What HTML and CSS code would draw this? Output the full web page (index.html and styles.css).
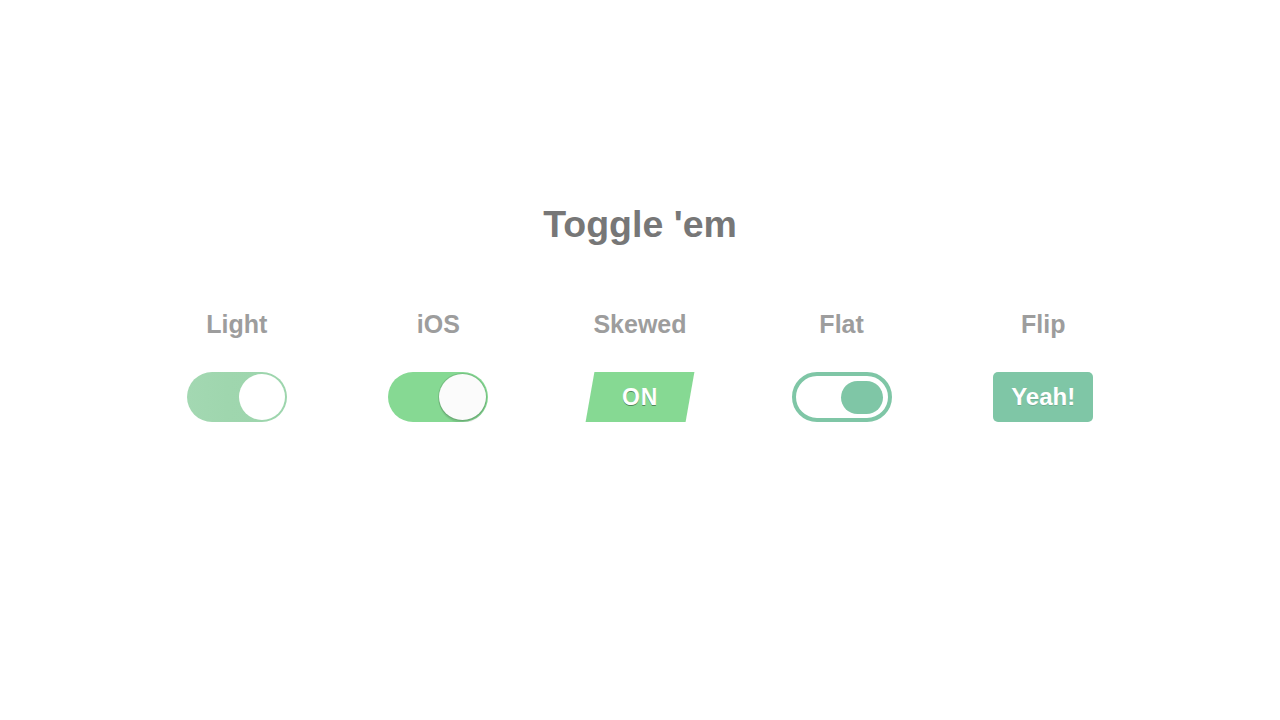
FILE: index.html
```html
<!DOCTYPE html>
<html lang="en">
<head>
    <meta charset="UTF-8">
    <meta name="viewport" content="width=device-width, initial-scale=1.0">
    <title>Toggle 'em</title>
    <link rel="stylesheet" href="styles.css">
</head>
<body>
    <div class="wrap">
        <h1 class="title">Toggle 'em</h1>

        <div class="toggles">
            <!-- Light -->
            <div class="toggle-col">
                <h4 class="toggle-name">Light</h4>
                <input class="tgl" id="cb1" type="checkbox" checked>
                <label class="tgl-btn tgl-light" for="cb1"><span class="knob"></span></label>
            </div>

            <!-- iOS -->
            <div class="toggle-col">
                <h4 class="toggle-name">iOS</h4>
                <input class="tgl" id="cb2" type="checkbox" checked>
                <label class="tgl-btn tgl-ios" for="cb2"><span class="knob"></span></label>
            </div>

            <!-- Skewed -->
            <div class="toggle-col">
                <h4 class="toggle-name">Skewed</h4>
                <input class="tgl" id="cb3" type="checkbox" checked>
                <label class="tgl-btn tgl-skewed" for="cb3"><span class="skew-text">ON</span></label>
            </div>

            <!-- Flat -->
            <div class="toggle-col">
                <h4 class="toggle-name">Flat</h4>
                <input class="tgl" id="cb4" type="checkbox" checked>
                <label class="tgl-btn tgl-flat" for="cb4"><span class="knob"></span></label>
            </div>

            <!-- Flip -->
            <div class="toggle-col">
                <h4 class="toggle-name">Flip</h4>
                <input class="tgl" id="cb5" type="checkbox" checked>
                <label class="tgl-btn tgl-flip" for="cb5">Yeah!</label>
            </div>
        </div>
    </div>
</body>
</html>
```

FILE: styles.css
```css
body {
    margin: 0;
    padding: 0;
    font-family: 'Liberation Sans', Arial, sans-serif;
    background-color: #fff;
}

.wrap {
    padding-top: 205px;
}

.title {
    margin: 0;
    font-size: 37.5px;
    line-height: 38px;
    font-weight: bold;
    color: #777;
    text-align: center;
}

.toggles {
    width: 1008px;
    margin: 69px auto 0;
    display: grid;
    grid-template-columns: repeat(5, 1fr);
}

.toggle-col {
    display: flex;
    flex-direction: column;
    align-items: center;
}

.toggle-name {
    margin: 0 0 35px;
    font-size: 25px;
    line-height: 25px;
    font-weight: bold;
    color: #9d9d9d;
}

.tgl {
    display: none;
}

.tgl-btn {
    box-sizing: border-box;
    width: 100px;
    height: 50px;
    display: flex;
    justify-content: flex-end;
    align-items: center;
    cursor: pointer;
    user-select: none;
}

/* Light */
.tgl-light {
    padding: 2px;
    border-radius: 25px;
    background: linear-gradient(90deg, #a3d8b2 0%, #9fd6ae 40%, #9dd5ad 100%);
}

.tgl-light .knob {
    width: 46px;
    height: 46px;
    border-radius: 50%;
    background-color: #fff;
}

/* iOS */
.tgl-ios {
    padding: 2px;
    border-radius: 25px;
    background-color: #86d993;
}

.tgl-ios .knob {
    width: 47px;
    height: 46px;
    border-radius: 50%;
    background-color: #fbfbfb;
    box-shadow: 0 0 0 1px rgba(0, 0, 0, 0.12), 0 3px 1px rgba(0, 0, 0, 0.1);
}

/* Skewed */
.tgl-skewed {
    justify-content: center;
    background-color: #86d993;
    transform: skew(-10deg);
}

.skew-text {
    transform: skew(10deg);
    font-size: 23px;
    font-weight: bold;
    letter-spacing: 1px;
    color: #fff;
    text-shadow: 0 1px 0 rgba(0, 0, 0, 0.4);
}

/* Flat */
.tgl-flat {
    padding: 5px;
    border: 4px solid #7fc6a6;
    border-radius: 25px;
    background-color: #fff;
}

.tgl-flat .knob {
    width: 42px;
    height: 33px;
    border-radius: 17px;
    background-color: #7fc6a6;
}

/* Flip */
.tgl-flip {
    justify-content: center;
    border-radius: 5px;
    background-color: #7fc6a6;
    color: #fff;
    font-size: 24px;
    font-weight: bold;
    text-shadow: 0 1px 0 rgba(0, 0, 0, 0.15);
}
```
